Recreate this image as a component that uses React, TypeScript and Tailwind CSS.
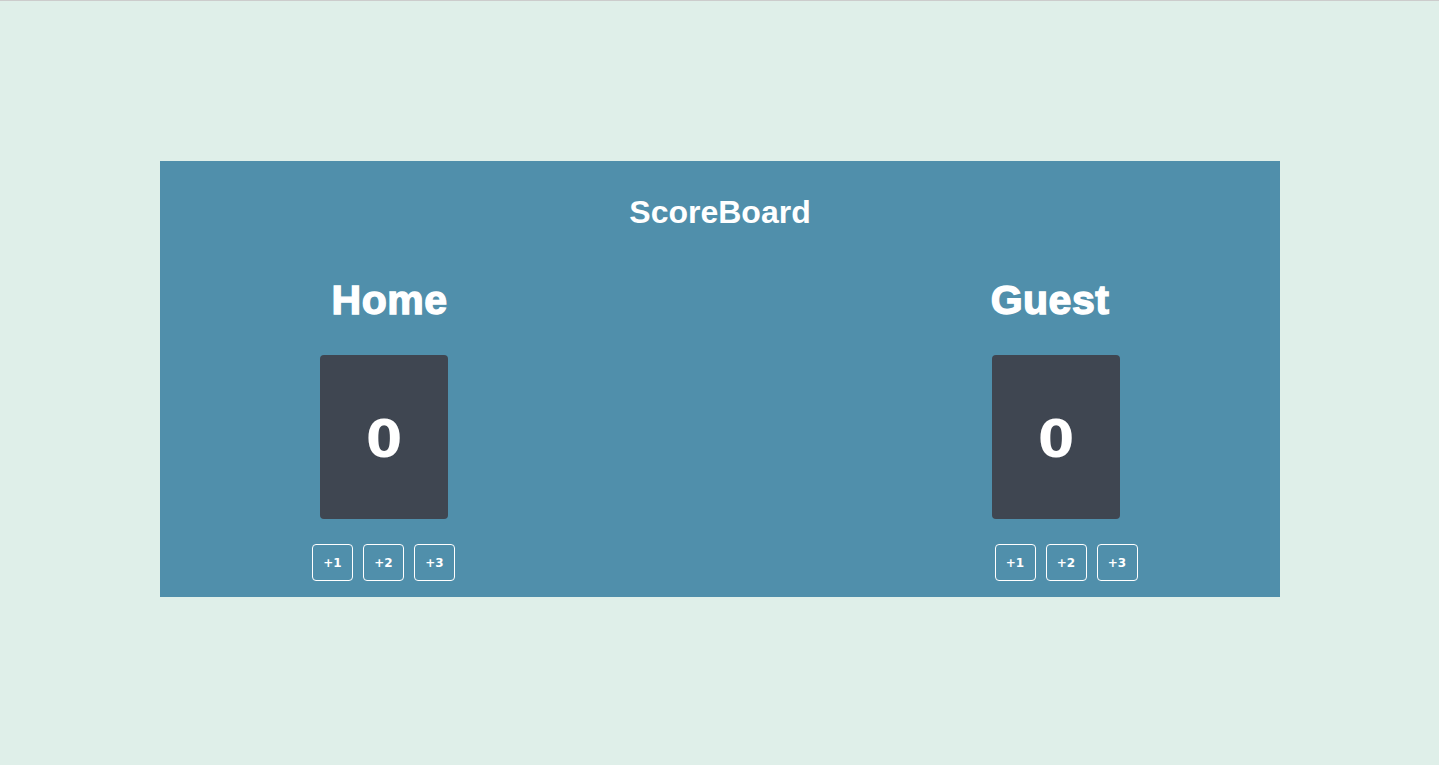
export default function App() {
  const teams = [
    { name: "Home", headingClass: "ml-[11px]", buttonsClass: "-ml-[1px]" },
    { name: "Guest", headingClass: "mr-[12px]", buttonsClass: "ml-[20px]" },
  ]

  return (
    <div className="min-h-[765px] bg-[#dfefe9] border-t border-[#cccccc] pt-[160px]">
      <section className="ml-[160px] w-[1120px] bg-[#508fab] pt-[35px] pb-[16px] text-white">
        <h1 className="text-center text-[32px] leading-none font-bold font-['Liberation_Sans',Arial,sans-serif]">
          ScoreBoard
        </h1>

        <div className="flex justify-between px-[160px] mt-[52px]">
          {teams.map((team) => (
            <div key={team.name} className="w-[128px] flex flex-col items-center">
              <h2
                className={`text-[41px] leading-none font-bold whitespace-nowrap tracking-[0.5px] font-['Liberation_Sans',Arial,sans-serif] [-webkit-text-stroke:1.4px_white] ${team.headingClass}`}
              >
                {team.name}
              </h2>
              <div className="mt-[34px] w-[128px] h-[164px] rounded-[4px] bg-[#3f4651] flex items-center justify-center pt-[4px]">
                <span className="text-[52px] leading-none font-bold font-['DejaVu_Sans',Verdana,sans-serif]">
                  0
                </span>
              </div>
              <div className={`mt-[25px] flex gap-[10px] ${team.buttonsClass}`}>
                {["+1", "+2", "+3"].map((label) => (
                  <button
                    key={label}
                    className="w-[41px] h-[37px] shrink-0 rounded-[4px] border border-white text-[12px] font-bold text-white font-['DejaVu_Sans',Verdana,sans-serif]"
                  >
                    {label}
                  </button>
                ))}
              </div>
            </div>
          ))}
        </div>
      </section>
    </div>
  )
}
